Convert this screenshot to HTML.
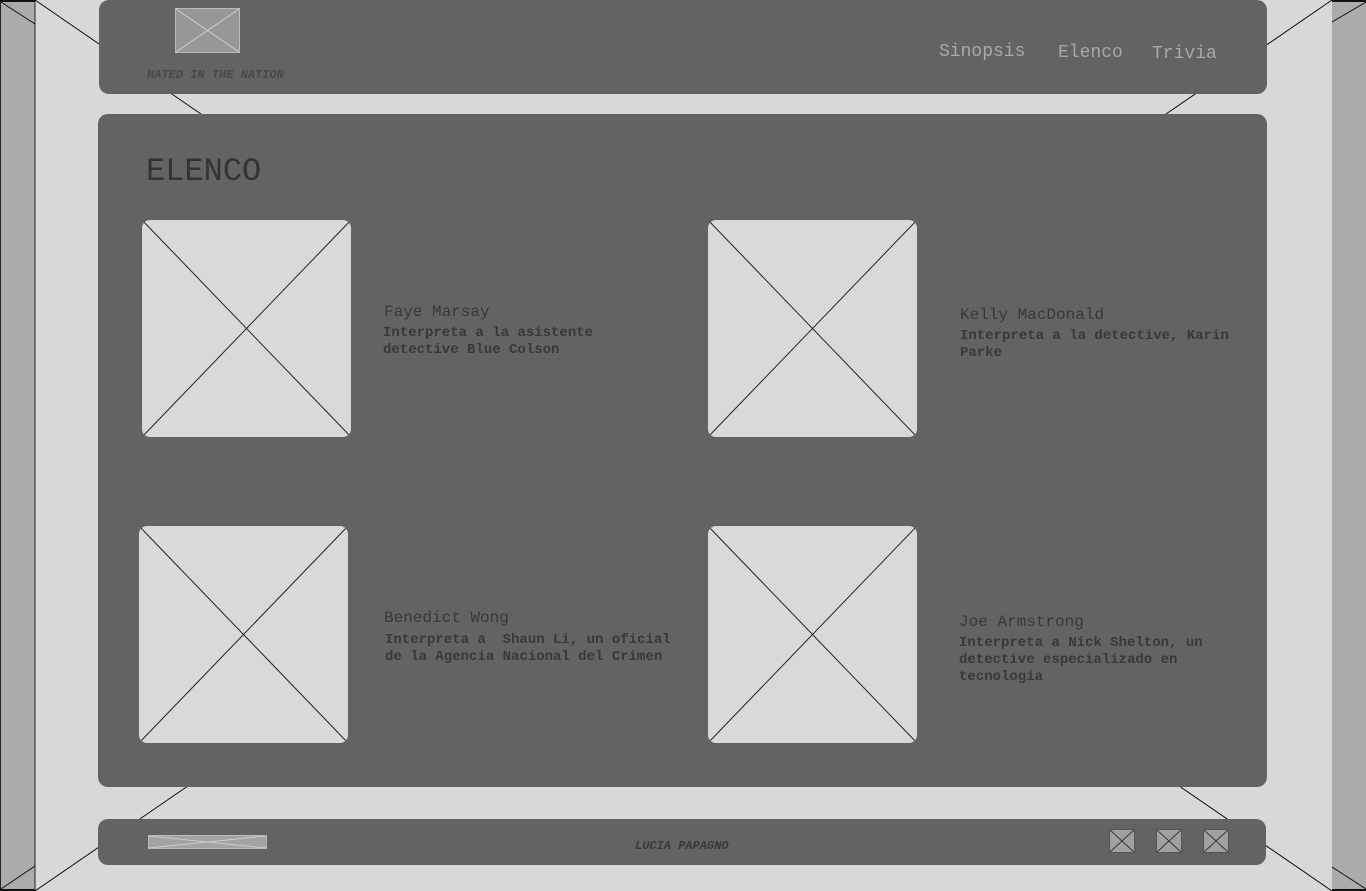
<!DOCTYPE html>
<html><head><meta charset="utf-8"><style>
*{margin:0;padding:0;box-sizing:border-box}
body{width:1366px;height:891px;position:relative;overflow:hidden;background:#d8d8d8;font-family:"Liberation Mono",monospace}
.a{position:absolute}
.panel{position:absolute;background:#636363;border-radius:10px}
.img{position:absolute;background:#d9d9d9;border-radius:8px;overflow:hidden}
.img svg{position:absolute;left:0;top:0;width:100%;height:100%}
.t{position:absolute;color:#393939;white-space:pre}
.nm{font-size:16px}
.ds{font-size:14px;font-weight:bold;line-height:17px}
.ic{position:absolute;background:#a0a0a0;border:1px solid #555}
</style></head><body>
<svg class="a" style="left:0;top:0" width="1366" height="891">
<rect x="0.5" y="0" width="34.5" height="891" fill="#ababab" stroke="#222" stroke-width="1"/>
<rect x="1332" y="0" width="34" height="891" fill="#ababab"/>
<line x1="1332" y1="1" x2="1366" y2="1" stroke="#111" stroke-width="2"/>
<line x1="0" y1="1" x2="35" y2="1" stroke="#111" stroke-width="2"/>
<line x1="0" y1="890" x2="35" y2="890" stroke="#111" stroke-width="2"/>
<line x1="1332" y1="890" x2="1366" y2="890" stroke="#111" stroke-width="2"/>
<line x1="1" y1="2" x2="35" y2="24" stroke="#111"/>
<line x1="1" y1="889" x2="35" y2="866" stroke="#111"/>
<line x1="1366" y1="2" x2="1332" y2="22" stroke="#111"/>
<line x1="1366" y1="889" x2="1332" y2="867" stroke="#111"/>
<line x1="35" y1="0" x2="1332" y2="891" stroke="#111"/>
<line x1="1332" y1="0" x2="35" y2="891" stroke="#111"/>
</svg>

<div class="panel" style="left:99px;top:0;width:1168px;height:94px"></div>
<div class="a" style="left:175px;top:8px;width:65px;height:45px;background:#979797;border:1px solid #bbb">
<svg width="63" height="43" style="position:absolute;left:0;top:0"><line x1="0" y1="0" x2="63" y2="43" stroke="#ccc"/><line x1="63" y1="0" x2="0" y2="43" stroke="#ccc"/></svg></div>
<div class="a" style="left:147px;top:68px;font-size:12px;font-style:italic;font-weight:bold;color:#4a4a4a">HATED IN THE NATION</div>
<div class="a" style="left:939px;top:42px;font-size:18px;color:#a8a8a8">Sinopsis</div>
<div class="a" style="left:1058px;top:43px;font-size:18px;color:#a8a8a8">Elenco</div>
<div class="a" style="left:1152px;top:44px;font-size:18px;color:#a8a8a8">Trivia</div>

<div class="panel" style="left:98px;top:114px;width:1169px;height:673px"></div>
<div class="a" style="left:146px;top:153px;font-size:32px;color:#333">ELENCO</div>

<div class="img" style="left:142px;top:220px;width:209px;height:217px"><svg viewBox="0 0 209 217" preserveAspectRatio="none"><line x1="0" y1="0" x2="209" y2="217" stroke="#222"/><line x1="209" y1="0" x2="0" y2="217" stroke="#222"/></svg></div>
<div class="img" style="left:708px;top:220px;width:209px;height:217px"><svg viewBox="0 0 209 217" preserveAspectRatio="none"><line x1="0" y1="0" x2="209" y2="217" stroke="#222"/><line x1="209" y1="0" x2="0" y2="217" stroke="#222"/></svg></div>
<div class="img" style="left:139px;top:526px;width:209px;height:217px"><svg viewBox="0 0 209 217" preserveAspectRatio="none"><line x1="0" y1="0" x2="209" y2="217" stroke="#222"/><line x1="209" y1="0" x2="0" y2="217" stroke="#222"/></svg></div>
<div class="img" style="left:708px;top:526px;width:209px;height:217px"><svg viewBox="0 0 209 217" preserveAspectRatio="none"><line x1="0" y1="0" x2="209" y2="217" stroke="#222"/><line x1="209" y1="0" x2="0" y2="217" stroke="#222"/></svg></div>

<div class="t nm" style="left:384px;top:303px">Faye Marsay</div>
<div class="t ds" style="left:383px;top:325px">Interpreta a la asistente
detective Blue Colson</div>
<div class="t nm" style="left:960px;top:306px">Kelly MacDonald</div>
<div class="t ds" style="left:960px;top:328px">Interpreta a la detective, Karin
Parke</div>
<div class="t nm" style="left:384px;top:609px">Benedict Wong</div>
<div class="t ds" style="left:385px;top:632px">Interpreta a  Shaun Li, un oficial
de la Agencia Nacional del Crimen</div>
<div class="t nm" style="left:959px;top:613px">Joe Armstrong</div>
<div class="t ds" style="left:959px;top:635px">Interpreta a Nick Shelton, un
detective especializado en
tecnología</div>

<div class="panel" style="left:98px;top:819px;width:1168px;height:46px"></div>
<div class="a" style="left:148px;top:835px;width:119px;height:14px;background:#a3a3a3;border:1px solid #bbb">
<svg width="117" height="12" style="position:absolute;left:0;top:0"><line x1="0" y1="0" x2="117" y2="12" stroke="#ccc"/><line x1="117" y1="0" x2="0" y2="12" stroke="#ccc"/></svg></div>
<div class="a" style="left:635px;top:839px;font-size:12px;font-style:italic;font-weight:bold;color:#3a3a3a">LUCIA PAPAGNO</div>
<div class="ic" style="left:1109px;top:829px;width:26px;height:24px"><svg width="24" height="22"><line x1="0" y1="0" x2="24" y2="22" stroke="#333"/><line x1="24" y1="0" x2="0" y2="22" stroke="#333"/></svg></div>
<div class="ic" style="left:1156px;top:829px;width:26px;height:24px"><svg width="24" height="22"><line x1="0" y1="0" x2="24" y2="22" stroke="#333"/><line x1="24" y1="0" x2="0" y2="22" stroke="#333"/></svg></div>
<div class="ic" style="left:1203px;top:829px;width:26px;height:24px"><svg width="24" height="22"><line x1="0" y1="0" x2="24" y2="22" stroke="#333"/><line x1="24" y1="0" x2="0" y2="22" stroke="#333"/></svg></div>
</body></html>
